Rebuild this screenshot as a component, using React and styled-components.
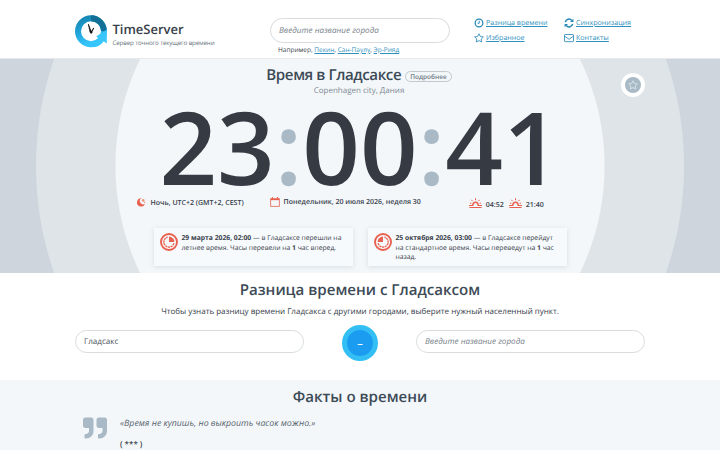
import styled, { createGlobalStyle } from 'styled-components';
import { FaQuoteRight } from 'react-icons/fa';

const links = [
  { icon: 'clock', text: 'Разница времени' },
  { icon: 'sync', text: 'Синхронизация' },
  { icon: 'star', text: 'Избранное' },
  { icon: 'mail', text: 'Контакты' },
];

const cities = ['Пекин', 'Сан-Паулу', 'Эр-Рияд'];

export default function App() {
  return (
    <>
      <GlobalStyle />
      <Page>
        <Header>
          <Logo />
          <Brand>
            <BrandName>TimeServer</BrandName>
            <BrandText>Сервер точного текущего времени</BrandText>
          </Brand>
          <Search>
            <Input $width={180} $height={25} placeholder="Введите название города" />
            <Examples>
              Например,{' '}
              {cities.map((city, index) => (
                <span key={city}>
                  {index > 0 && ', '}
                  <Link href="#">{city}</Link>
                </span>
              ))}
            </Examples>
          </Search>
          <Nav>
            {links.map(({ icon, text }) => (
              <NavItem key={icon}>
                <NavIcon name={icon} />
                <NavText>
                  <Link href="#">{text}</Link>
                </NavText>
              </NavItem>
            ))}
          </Nav>
        </Header>

        <Hero>
          <Favourite aria-label="Избранное">
            <StarIcon />
          </Favourite>
          <HeroTitle>
            <Title $spacing={-0.42}>Время в Гладсаксе</Title>
            <More>Подробнее</More>
          </HeroTitle>
          <Region>Copenhagen city, Дания</Region>
          <Clock>
            <Digits>23</Digits>
            <Colon>:</Colon>
            <Digits>00</Digits>
            <Colon>:</Colon>
            <Digits>41</Digits>
          </Clock>
          <Info>
            <InfoItem $gap={5} $top={1}>
              <MoonIcon />
              <InfoText>Ночь, UTC+2 (GMT+2, CEST)</InfoText>
            </InfoItem>
            <InfoItem $gap={4} $left={26}>
              <CalendarIcon />
              <InfoText>Понедельник, 20 июля 2026, неделя 30</InfoText>
            </InfoItem>
            <InfoItem $gap={4} $left={48} $top={1}>
              <SunIcon />
              <InfoText $top={3}>04:52</InfoText>
            </InfoItem>
            <InfoItem $gap={4} $left={5} $top={1}>
              <SunIcon />
              <InfoText $top={3}>21:40</InfoText>
            </InfoItem>
          </Info>
          <Cards>
            <Card>
              <DialIcon />
              <p>
                <b>29 марта 2026, 02:00</b> — в Гладсаксе перешли на
                <br />
                летнее время. Часы перевели на <b>1</b> час вперед.
              </p>
            </Card>
            <Card>
              <DialIcon back />
              <p>
                <b>25 октября 2026, 03:00</b> — в Гладсаксе перейдут
                <br />
                на стандартное время. Часы переведут на <b>1</b> час
                <br />
                назад.
              </p>
            </Card>
          </Cards>
        </Hero>

        <Difference>
          <Title>Разница времени с Гладсаксом</Title>
          <Hint>
            Чтобы узнать разницу времени Гладсакса с другими городами, выберите
            нужный населенный пункт.
          </Hint>
          <Compare>
            <Input $width={229} $height={23} $top={5} defaultValue="Гладсакс" />
            <Minus>–</Minus>
            <Input
              $width={229}
              $height={23}
              $top={5}
              placeholder="Введите название города"
            />
          </Compare>
        </Difference>

        <Facts>
          <Title>Факты о времени</Title>
          <Quote>
            <FaQuoteRight />
            <div>
              <QuoteText>«Время не купишь, но выкроить часок можно.»</QuoteText>
              <Author>( *** )</Author>
            </div>
          </Quote>
        </Facts>
      </Page>
    </>
  );
}

function Logo() {
  return (
    <svg width="32" height="33" viewBox="0 0 32 33">
      <defs>
        <linearGradient id="ring" x1="0" y1="0" x2="0.3" y2="1">
          <stop offset="0" stopColor="#1686b0" />
          <stop offset="0.55" stopColor="#21a5dc" />
          <stop offset="1" stopColor="#35c5fa" />
        </linearGradient>
      </defs>
      <circle cx="16" cy="16.3" r="13" fill="#fff" stroke="url(#ring)" strokeWidth="6" />
      <path d="M16 .3a16 16 0 0 1 15.8 16.5l-5.6-.8A10 10 0 0 0 16 6.3z" fill="#126f95" />
      <path d="M21.2 21.6l10.6-7.2v14.2l-3.2-2.4c-2.2 3.3-5.4 5.5-9.4 6l1.9-6.2 3.1-2.3z" fill="#38c6fb" />
      <path d="M13.4 9.2l2.2 5.8 1.6 2.2-.9 1.3-1.2-1z" fill="#111" stroke="#111" strokeWidth=".7" />
      <path d="M18.8 13l-2.6 4.5" stroke="#111" strokeWidth="1.1" />
    </svg>
  );
}

const starPath =
  'M6 .9l1.6 3.3 3.6.5-2.6 2.5.6 3.6L6 9.1l-3.2 1.7.6-3.6L.8 4.7l3.6-.5z';

function NavIcon({ name }) {
  return (
    <svg width="10" height="10" viewBox="0 0 12 12" fill="none" stroke="#2588b8">
      {name === 'clock' && (
        <>
          <circle cx="6" cy="6" r="4.6" strokeWidth="1.5" />
          <path d="M6.3 3.3v3H4.2" strokeWidth="1.1" />
        </>
      )}
      {name === 'sync' && (
        <>
          <path d="M1.6 5A4.5 4.5 0 0 1 9.4 2.9M10.4 7A4.5 4.5 0 0 1 2.6 9.1" strokeWidth="1.8" />
          <path d="M11.3.9v4H7.2zM.7 11.1v-4h4.1z" fill="#2588b8" stroke="none" />
        </>
      )}
      {name === 'star' && <path d={starPath} strokeWidth="1" />}
      {name === 'mail' && (
        <>
          <rect x=".6" y="1.8" width="10.8" height="8.6" rx=".8" />
          <path d="M.8 3.8L6 7.6l5.2-3.8" />
        </>
      )}
    </svg>
  );
}

function StarIcon() {
  return (
    <svg width="10" height="10" viewBox="0 0 12 12" fill="none" stroke="#dce9f1">
      <path d={starPath} />
    </svg>
  );
}

function MoonIcon() {
  return (
    <svg width="9" height="9" viewBox="0 0 9 9" fill="#e8604f">
      <path d="M4.3.3A2.5 2.5 0 0 0 8 5.7 4.1 4.1 0 1 1 4.3.3z" />
      <circle cx="6.2" cy="2.4" r="1.3" fill="#f0947c" />
      <circle cx="7.7" cy="4.4" r=".7" fill="#f0947c" />
    </svg>
  );
}

function CalendarIcon() {
  return (
    <svg width="10" height="10" viewBox="0 0 10 10" fill="none" stroke="#e8604f">
      <path d="M.6 1.7h8.8v7.7H.6z" strokeWidth=".8" />
      <path d="M.6 2.4h8.8" strokeWidth="1.5" />
      <path d="M2.4 0v2M7.6 0v2" strokeWidth="1" />
    </svg>
  );
}

function SunIcon() {
  return (
    <svg width="13" height="11" viewBox="0 0 13 11" fill="none" stroke="#e8604f">
      <path d="M0 7.5h4.2M8.8 7.5H13M.4 9.5h12.2" strokeWidth="1.2" />
      <path d="M4 7.5a2.6 2.6 0 1 1 5 0" strokeWidth="1.6" />
      <path d="M6.5.2v2M2.4 1.8l1.2 1.4M10.6 1.8L9.4 3.2M1 5.2h1.4M12 5.2h-1.4" />
    </svg>
  );
}

function DialIcon({ back }) {
  return (
    <svg width="18" height="18" viewBox="0 0 18 18" fill="none" stroke="#e8604f">
      <circle cx="9" cy="9" r="8" strokeWidth="1.9" />
      <g transform={back ? 'matrix(-1 0 0 1 18 0)' : undefined}>
        <path d="M9 3.6V9h5.4A5.4 5.4 0 0 0 9 3.6z" fill="#e8604f" stroke="none" />
        <path d="M13.9 10.2A5.1 5.1 0 1 1 7.6 4.1" strokeWidth="1.4" strokeDasharray="2.2 .6" />
      </g>
    </svg>
  );
}

const GlobalStyle = createGlobalStyle`
  * {
    box-sizing: border-box;
  }
  body {
    margin: 0;
    overflow: hidden;
    background: #fff;
    color: #37404a;
    font-family: 'Open Sans', 'Noto Sans', sans-serif;
    text-rendering: geometricPrecision;
  }
  p, h1, h2 {
    margin: 0;
  }
  svg {
    display: block;
    flex-shrink: 0;
  }
`;

const Page = styled.div`
  width: 720px;
  height: 450px;
  overflow: hidden;
  white-space: nowrap;
`;

const Header = styled.header`
  display: flex;
  align-items: flex-start;
  height: 58px;
  padding: 15px 75px 0;
`;

const Brand = styled.div`
  width: 157px;
  margin-left: 5.5px;
`;

const BrandName = styled.div`
  margin-top: 5px;
  font-size: 13px;
  line-height: 18px;
  font-weight: 600;
`;

const BrandText = styled.div`
  font-size: 6.2px;
  line-height: 9px;
  letter-spacing: -0.13px;
  color: #66717b;
`;

const Search = styled.div`
  width: 204px;
  margin-left: 0.5px;
  padding-top: 3px;
`;

const Input = styled.input`
  display: block;
  width: ${({ $width }) => $width}px;
  height: ${({ $height }) => $height}px;
  margin: ${({ $top = 0 }) => $top}px 0 0;
  padding: 0 8px;
  border: 1px solid #d8dcdf;
  border-radius: 13px;
  outline: none;
  background: #fff;
  color: #4a525a;
  font-family: inherit;
  font-size: 8.1px;
  text-rendering: inherit;

  &::placeholder {
    color: #77818a;
    font-style: italic;
  }
`;

const Examples = styled.p`
  padding: 2px 0 0 8px;
  font-size: 6.5px;
  line-height: 10px;
`;

const Link = styled.a`
  color: #2f90bd;
  text-decoration: underline;
`;

const Nav = styled.nav`
  display: grid;
  grid-template-columns: 90px 80px;
  grid-auto-rows: 15px;
`;

const NavItem = styled.div`
  display: flex;
  align-items: center;
  gap: 2px;
  font-size: 7.1px;
  line-height: 10px;
`;

const NavText = styled.span`
  padding-top: 1px;
`;

const Hero = styled.section`
  position: relative;
  display: flex;
  flex-direction: column;
  align-items: center;
  height: 215px;
  background: radial-gradient(
    circle at 360px 108px,
    #f3f7fa 244px,
    #dfe4e9 245px,
    #dfe4e9 323.5px,
    #ced5dd 324.5px
  );
  box-shadow: inset 0 1px #e6eaed;
`;

const Favourite = styled.button`
  position: absolute;
  top: 15px;
  right: 75px;
  display: grid;
  place-items: center;
  width: 24px;
  height: 24px;
  padding: 0;
  border: 4px solid #fff;
  border-radius: 50%;
  background: #a9b9c5;
`;

const HeroTitle = styled.div`
  display: flex;
  align-items: center;
  gap: 4px;
  height: 27px;
  margin-right: 2px;
  padding-top: 7px;
`;

const Title = styled.h2`
  font-size: 15.1px;
  line-height: 20px;
  font-weight: 600;
  letter-spacing: ${({ $spacing = 0 }) => $spacing}px;
  color: #3c4a56;
`;

const More = styled.span`
  margin-top: 3px;
  padding: 0 4px;
  border: 1px solid #c2c8cd;
  border-radius: 6px;
  font-size: 6.5px;
  line-height: 9px;
  font-weight: 600;
  color: #707a83;
`;

const Region = styled.p`
  margin-left: -2px;
  font-size: 8px;
  line-height: 12px;
  color: #808a93;
`;

const Clock = styled.div`
  display: flex;
  height: 100px;
  font-size: 101px;
  line-height: 99px;
  font-weight: 600;
  letter-spacing: -0.1px;
  color: #363b43;
`;

const Digits = styled.span``;

const Colon = styled.span`
  color: #a9b9c5;
`;

const Info = styled.div`
  display: flex;
  align-items: flex-start;
  align-self: flex-start;
  height: 16px;
  margin: 0 0 15px 136.5px;
  font-size: 7px;
  line-height: 10px;
  font-weight: 600;
`;

const InfoItem = styled.div`
  display: flex;
  gap: ${({ $gap }) => $gap}px;
  margin-left: ${({ $left = 0 }) => $left}px;
  padding-top: ${({ $top = 0 }) => $top}px;
`;

const InfoText = styled.span`
  padding-top: ${({ $top = 1 }) => $top}px;
`;

const Cards = styled.div`
  display: flex;
  gap: 15px;
`;

const Card = styled.div`
  display: flex;
  gap: 4px;
  width: 199px;
  height: 38px;
  padding: 5px 6px;
  background: #f7fafc;
  box-shadow: 0 1px 5px #d6dee4;
  font-size: 6.77px;
  line-height: 9.6px;
`;

const Difference = styled.section`
  display: flex;
  flex-direction: column;
  align-items: center;
  height: 107px;
  padding-top: 7px;
`;

const Hint = styled.p`
  margin-top: 6px;
  font-size: 8px;
  line-height: 12px;
`;

const Compare = styled.div`
  display: flex;
  align-items: flex-start;
  justify-content: space-between;
  width: 570px;
  margin-top: 7px;
`;

const Minus = styled.button`
  width: 36px;
  height: 36px;
  padding: 0;
  border: 5px solid #33bff4;
  border-radius: 50%;
  background: #1c9cf0;
  color: #fff;
  font: 600 11px/26px 'Open Sans', sans-serif;
`;

const Facts = styled.section`
  display: flex;
  flex-direction: column;
  align-items: center;
  height: 70px;
  padding-top: 7px;
  background: #f3f7fa;
`;

const Quote = styled.div`
  display: flex;
  align-self: stretch;
  gap: 13px;
  padding: 9px 83px 0;

  & > svg {
    width: 24px;
    height: 24px;
    color: #a9b9c5;
  }
`;

const QuoteText = styled.p`
  font-size: 8.75px;
  line-height: 14px;
  font-style: italic;
  color: #59646e;
`;

const Author = styled.p`
  margin-top: 8px;
  font-size: 8px;
  line-height: 14px;
  font-weight: 600;
`;
